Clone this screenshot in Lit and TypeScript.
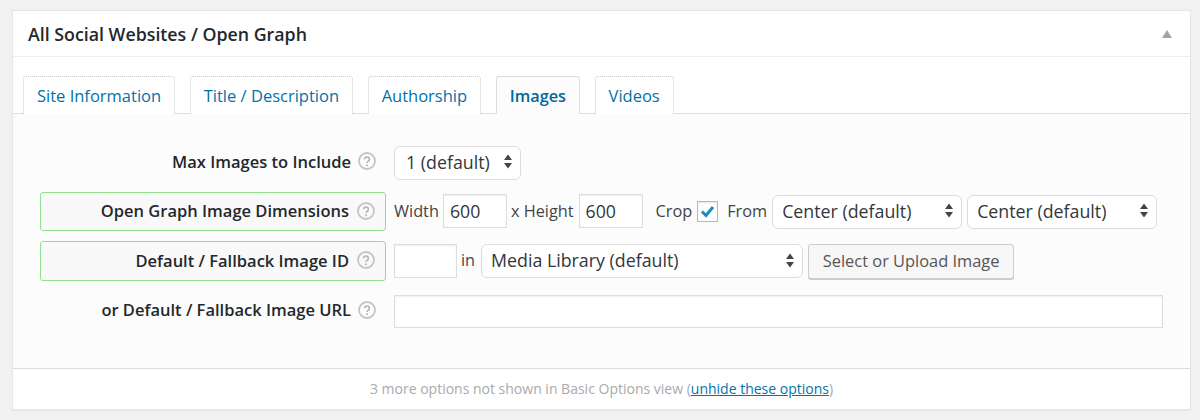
import { LitElement, html, css } from 'lit';
import { customElement } from 'lit/decorators.js';

const tabs = ['Site Information', 'Title / Description', 'Authorship', 'Images', 'Videos'];

@customElement('app-root')
export class AppRoot extends LitElement {
  static styles = css`
    :host {
      display: block;
      width: 1200px;
      height: 420px;
      overflow: hidden;
      background: #f1f1f1;
      font-family: 'Open Sans', sans-serif;
      font-size: 16.5px;
      color: #444;
    }
    .card {
      width: 1179px;
      box-sizing: border-box;
      margin: 10px 0 0 12px;
      background: #fff;
      border: 1px solid #e5e5e5;
      box-shadow: 0 1px 1px rgba(0, 0, 0, 0.04);
    }
    .header {
      display: flex;
      justify-content: space-between;
      align-items: center;
      height: 45px;
      padding: 0 18px 0 15px;
      border-bottom: 1px solid #eee;
      font-size: 17.8px;
      font-weight: 600;
      color: #23282d;
    }
    .toggle {
      width: 0;
      height: 0;
      border-left: 5px solid transparent;
      border-right: 5px solid transparent;
      border-bottom: 8px solid #a0a5aa;
    }
    .tabs {
      display: flex;
      gap: 14.6px;
      height: 37px;
      padding: 19px 0 0 10px;
      border-bottom: 1px solid #ddd;
    }
    .tab {
      box-sizing: border-box;
      height: 38px;
      padding: 0 13px;
      line-height: 38px;
      color: #0073aa;
      background: #fff;
      border: 1px dotted #ccc;
      border-bottom: none;
      border-radius: 3px 3px 0 0;
      white-space: nowrap;
    }
    .tab.active {
      background: #fcfcfc;
      border: 1px solid #ddd;
      border-bottom: none;
      font-size: 16.3px;
      font-weight: 600;
      color: #00699b;
      position: relative;
      z-index: 1;
    }
    .body {
      display: grid;
      grid-template-columns: 347px 1fr;
      grid-template-rows: 39px 39px 40px 40px;
      column-gap: 7px;
      row-gap: 10px;
      padding: 29px 0 37px 27px;
      background: #fcfcfc;
    }
    .label {
      display: flex;
      justify-content: flex-end;
      align-items: center;
      gap: 7px;
      box-sizing: border-box;
      padding: 0 10px 3px 0;
      border: 1px solid transparent;
      border-radius: 3px;
      font-size: 16.5px;
      font-weight: 600;
      color: #23282d;
      white-space: nowrap;
    }
    .label.changed {
      gap: 8px;
      margin-right: 1px;
      padding: 0 10px 2px 0;
      border-color: #8fdf8f;
      background: #f9f9f9;
    }
    .help {
      flex: none;
      width: 18px;
      height: 18px;
    }
    .field {
      display: flex;
      align-items: center;
      font-size: 16.3px;
      white-space: nowrap;
    }
    .text {
      padding-bottom: 2px;
    }
    .input {
      box-sizing: border-box;
      height: 34px;
      margin-bottom: 1px;
      padding: 0 6px;
      border: 1px solid #ddd;
      background: #fff;
      box-shadow: inset 0 1px 2px rgba(0, 0, 0, 0.07);
      font: 17.7px 'Open Sans', sans-serif;
      color: #32373c;
      outline: none;
    }
    .short {
      width: 64px;
    }
    .id {
      width: 63px;
    }
    .wide {
      width: 769px;
      height: 33px;
      margin: 1px 0 0;
    }
    .select {
      display: flex;
      justify-content: space-between;
      align-items: center;
      box-sizing: border-box;
      height: 34px;
      padding: 0 8px 2px 9px;
      border: 1px solid #ddd;
      border-radius: 6px;
      background: #fff;
      font-size: 17.8px;
      color: #32373c;
    }
    .arrows {
      flex: none;
      width: 8px;
      height: 15px;
    }
    .s-max {
      width: 127px;
      padding-left: 11px;
    }
    .s-center {
      width: 190px;
    }
    .s-media {
      width: 322px;
    }
    .check {
      box-sizing: border-box;
      width: 21px;
      height: 21px;
      border: 1px solid #b4b9be;
      background: #fff;
      box-shadow: inset 0 1px 2px rgba(0, 0, 0, 0.1);
    }
    .check svg {
      display: block;
    }
    .button {
      box-sizing: border-box;
      width: 206px;
      height: 35px;
      margin-left: 5px;
      padding: 0 0 1px;
      border: 1px solid #ccc;
      border-radius: 3px;
      background: #f7f7f7;
      box-shadow: 0 1px 0 #ccc;
      font: 16.4px 'Open Sans', sans-serif;
      color: #555;
    }
    .ml4 {
      margin-left: 4px;
    }
    .ml5 {
      margin-left: 5px;
    }
    .ml6 {
      margin-left: 6px;
    }
    .ml9 {
      margin-left: 9px;
    }
    .ml13 {
      margin-left: 13px;
    }
    .footer {
      height: 40px;
      line-height: 40px;
      border-top: 1px solid #ddd;
      text-align: center;
      font-size: 14px;
      color: #aaa;
    }
    .footer a {
      color: #0073aa;
      text-decoration: underline;
    }
  `;

  private help() {
    return html`<svg class="help" viewBox="0 0 18 18">
      <circle cx="9" cy="9" r="8" fill="none" stroke="#c4c4c4" stroke-width="1.8"></circle>
      <path d="M6.6 7.2a2.4 2.3 0 1 1 3.7 2c-.9.6-1.3 1-1.3 1.9" fill="none" stroke="#b4b4b4" stroke-width="1.6"></path>
      <circle cx="9" cy="13.2" r="1" fill="#b4b4b4"></circle>
    </svg>`;
  }

  private select(text: string, cls: string) {
    return html`<div class="select ${cls}">
      <span>${text}</span>
      <svg class="arrows" viewBox="0 0 8 15">
        <path d="M4 0.5 8 6H0ZM4 14.5 0 9H8Z" fill="#444"></path>
      </svg>
    </div>`;
  }

  render() {
    return html`
      <div class="card">
        <div class="header">
          <span>All Social Websites / Open Graph</span>
          <span class="toggle"></span>
        </div>
        <div class="tabs">
          ${tabs.map((t) => html`<div class="tab ${t === 'Images' ? 'active' : ''}">${t}</div>`)}
        </div>
        <div class="body">
          <div class="label">Max Images to Include ${this.help()}</div>
          <div class="field">${this.select('1 (default)', 's-max')}</div>

          <div class="label changed">Open Graph Image Dimensions ${this.help()}</div>
          <div class="field">
            <span class="text">Width</span>
            <input class="input short ml4" value="600" />
            <span class="text ml4">x Height</span>
            <input class="input short ml5" value="600" />
            <span class="text ml13">Crop</span>
            <div class="check ml5">
              <svg width="19" height="19" viewBox="0 0 19 19">
                <path d="M4 9.5 8 13.5 15 5" fill="none" stroke="#1e8cbe" stroke-width="3"></path>
              </svg>
            </div>
            <span class="text ml9">From</span>
            <div class="ml5">${this.select('Center (default)', 's-center')}</div>
            <div class="ml5">${this.select('Center (default)', 's-center')}</div>
          </div>

          <div class="label changed">Default / Fallback Image ID ${this.help()}</div>
          <div class="field">
            <input class="input id" />
            <span class="text ml4">in</span>
            <div class="ml6">${this.select('Media Library (default)', 's-media')}</div>
            <button class="button">Select or Upload Image</button>
          </div>

          <div class="label">or Default / Fallback Image URL ${this.help()}</div>
          <div class="field"><input class="input wide" /></div>
        </div>
        <div class="footer">
          3 more options not shown in Basic Options view (<a href="#">unhide these options</a>)
        </div>
      </div>
    `;
  }
}
